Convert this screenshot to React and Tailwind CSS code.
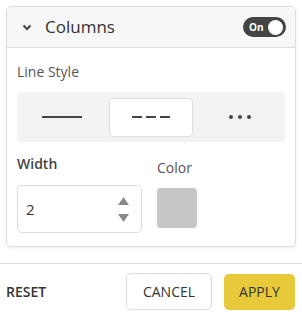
import {useState} from "react"

const font = {fontFamily: "'Open Sans', 'Liberation Sans', sans-serif"}

function Toggle({on}) {
  return (
    <div className="flex items-center justify-between w-[43px] h-[20px] rounded-full bg-[#444] pl-[6px] pr-[3px]">
      <span className="text-[10px] font-bold text-white leading-none">{on ? "On" : "Off"}</span>
      <span className="w-[15px] h-[15px] rounded-full bg-white" />
    </div>
  )
}

function LineOption({kind, active, onClick}) {
  return (
    <button
      onClick={onClick}
      className={
        active
          ? "flex-1 h-[39px] flex items-center justify-center bg-white border border-[#ddd] rounded-[4px]"
          : "flex-1 h-[39px] flex items-center justify-center"
      }
    >
      {kind === "solid" && <span className="block w-[40px] h-[2px] bg-[#444]" />}
      {kind === "dashed" && (
        <span className="flex gap-[4px]">
          <span className="block w-[10px] h-[2px] bg-[#444]" />
          <span className="block w-[10px] h-[2px] bg-[#444]" />
          <span className="block w-[10px] h-[2px] bg-[#444]" />
        </span>
      )}
      {kind === "dotted" && (
        <span className="flex gap-[5px]">
          <span className="block w-[4px] h-[4px] rounded-full bg-[#444]" />
          <span className="block w-[4px] h-[4px] rounded-full bg-[#444]" />
          <span className="block w-[4px] h-[4px] rounded-full bg-[#444]" />
        </span>
      )}
    </button>
  )
}

export default function App() {
  const [style, setStyle] = useState("dashed")

  return (
    <div className="w-[302px] h-[322px] bg-white flex flex-col" style={font}>
      <div className="px-[6px] pt-[6px]">
        <div className="border border-[#ddd] rounded-[5px] shadow-[0_1px_3px_rgba(0,0,0,0.08)] overflow-hidden">
          <div className="h-[41px] flex items-center bg-[#f7f7f7] border-b border-[#ddd] pl-[15px] pr-[9px]">
            <svg width="10" height="7" viewBox="0 0 10 7" className="mr-[13px]">
              <path d="M1.5 1.5 L5 5 L8.5 1.5" stroke="#444" strokeWidth="2" fill="none" />
            </svg>
            <span className="text-[17px] text-[#333] flex-1">Columns</span>
            <Toggle on />
          </div>
          <div className="px-[10px] pt-[14px] pb-[13px]">
            <div className="text-[14px] text-[#555] leading-[20px]">Line Style</div>
            <div className="mt-[10px] h-[50px] bg-[#f3f3f3] rounded-[5px] flex items-center px-[4px] gap-[6px]">
              <LineOption kind="solid" active={style === "solid"} onClick={() => setStyle("solid")} />
              <LineOption kind="dashed" active={style === "dashed"} onClick={() => setStyle("dashed")} />
              <LineOption kind="dotted" active={style === "dotted"} onClick={() => setStyle("dotted")} />
            </div>
            <div className="mt-[12px] flex gap-[15px]">
              <div className="w-[125px]">
                <div className="text-[14px] font-semibold text-[#444] leading-[20px]">Width</div>
                <div className="mt-[11px] h-[48px] border border-[#ddd] rounded-[5px] flex items-center pl-[8px] pr-[12px]">
                  <span className="text-[15px] text-[#333] flex-1">2</span>
                  <div className="flex flex-col gap-[9px]">
                    <svg width="11" height="8" viewBox="0 0 11 8"><path d="M5.5 0 L11 8 L0 8 Z" fill="#8a8a8a" /></svg>
                    <svg width="11" height="8" viewBox="0 0 11 8"><path d="M0 0 L11 0 L5.5 8 Z" fill="#8a8a8a" /></svg>
                  </div>
                </div>
              </div>
              <div>
                <div className="mt-[4px] text-[14px] text-[#555] leading-[20px]">Color</div>
                <div className="mt-[10px] w-[40px] h-[40px] rounded-[4px] bg-[#c6c6c6]" />
              </div>
            </div>
          </div>
        </div>
      </div>
      <div className="mt-[16px] border-t border-[#ddd] flex items-center pl-[6px] pr-[7px] pt-[9px]">
        <button className="text-[14px] font-semibold text-[#333] flex-1 text-left">RESET</button>
        <button className="h-[37px] w-[86px] border border-[#ddd] rounded-[5px] bg-white text-[14px] font-medium text-[#333]">CANCEL</button>
        <button className="ml-[12px] h-[36px] w-[71px] rounded-[5px] bg-[#e8c93a] text-[14px] font-medium text-[#333]">APPLY</button>
      </div>
    </div>
  )
}
